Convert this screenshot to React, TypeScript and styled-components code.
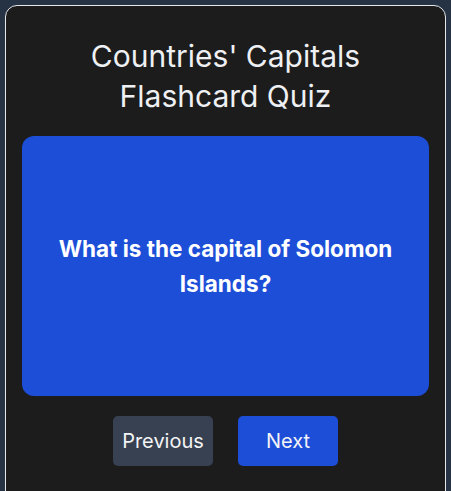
import React, { useState } from "react";
import styled, { createGlobalStyle } from "styled-components";

const GlobalStyle = createGlobalStyle`
  html, body {
    margin: 0;
    padding: 0;
    background: #263345;
    font-family: Inter, "Noto Sans", sans-serif;
  }
`;

const Page = styled.div`
  padding: 5px;
`;

const Card = styled.div`
  background: #1c1c1c;
  border: 1px solid #e5e7eb;
  border-radius: 12px;
  padding: 30px 16px 40px;
  display: flex;
  flex-direction: column;
  align-items: stretch;
`;

const Title = styled.h1`
  margin: 0 0 20px;
  font-size: 30px;
  line-height: 40px;
  font-weight: 400;
  color: #eef0f3;
  text-align: center;
`;

const Panel = styled.div`
  height: 260px;
  background: #1d4ed8;
  border-radius: 12px;
  display: flex;
  align-items: center;
  justify-content: center;
  padding: 0 24px;
  box-sizing: border-box;
`;

const Question = styled.p`
  margin: 0;
  font-size: 22.5px;
  line-height: 35px;
  font-weight: 700;
  color: #ffffff;
  text-align: center;
`;

const Controls = styled.div`
  display: flex;
  justify-content: center;
  gap: 25px;
  margin-top: 20px;
`;

const NavButton = styled.button<{ $variant: "gray" | "blue" }>`
  width: 100px;
  height: 50px;
  border: none;
  border-radius: 5px;
  background: ${(p) => (p.$variant === "gray" ? "#374151" : "#1d4ed8")};
  color: #f3f4f6;
  font-family: Inter, "Noto Sans", sans-serif;
  font-size: 20px;
  cursor: pointer;
  padding: 0;
`;

const questions = [
  "What is the capital of Solomon Islands?",
];

export default function App() {
  const [i, setI] = useState(0);
  return (
    <>
      <GlobalStyle />
      <Page>
        <Card>
          <Title>
            Countries' Capitals
            <br />
            Flashcard Quiz
          </Title>
          <Panel>
            <Question>{questions[i]}</Question>
          </Panel>
          <Controls>
            <NavButton $variant="gray" onClick={() => setI(Math.max(0, i - 1))}>
              Previous
            </NavButton>
            <NavButton $variant="blue" onClick={() => setI(Math.min(questions.length - 1, i + 1))}>
              Next
            </NavButton>
          </Controls>
        </Card>
      </Page>
    </>
  );
}
